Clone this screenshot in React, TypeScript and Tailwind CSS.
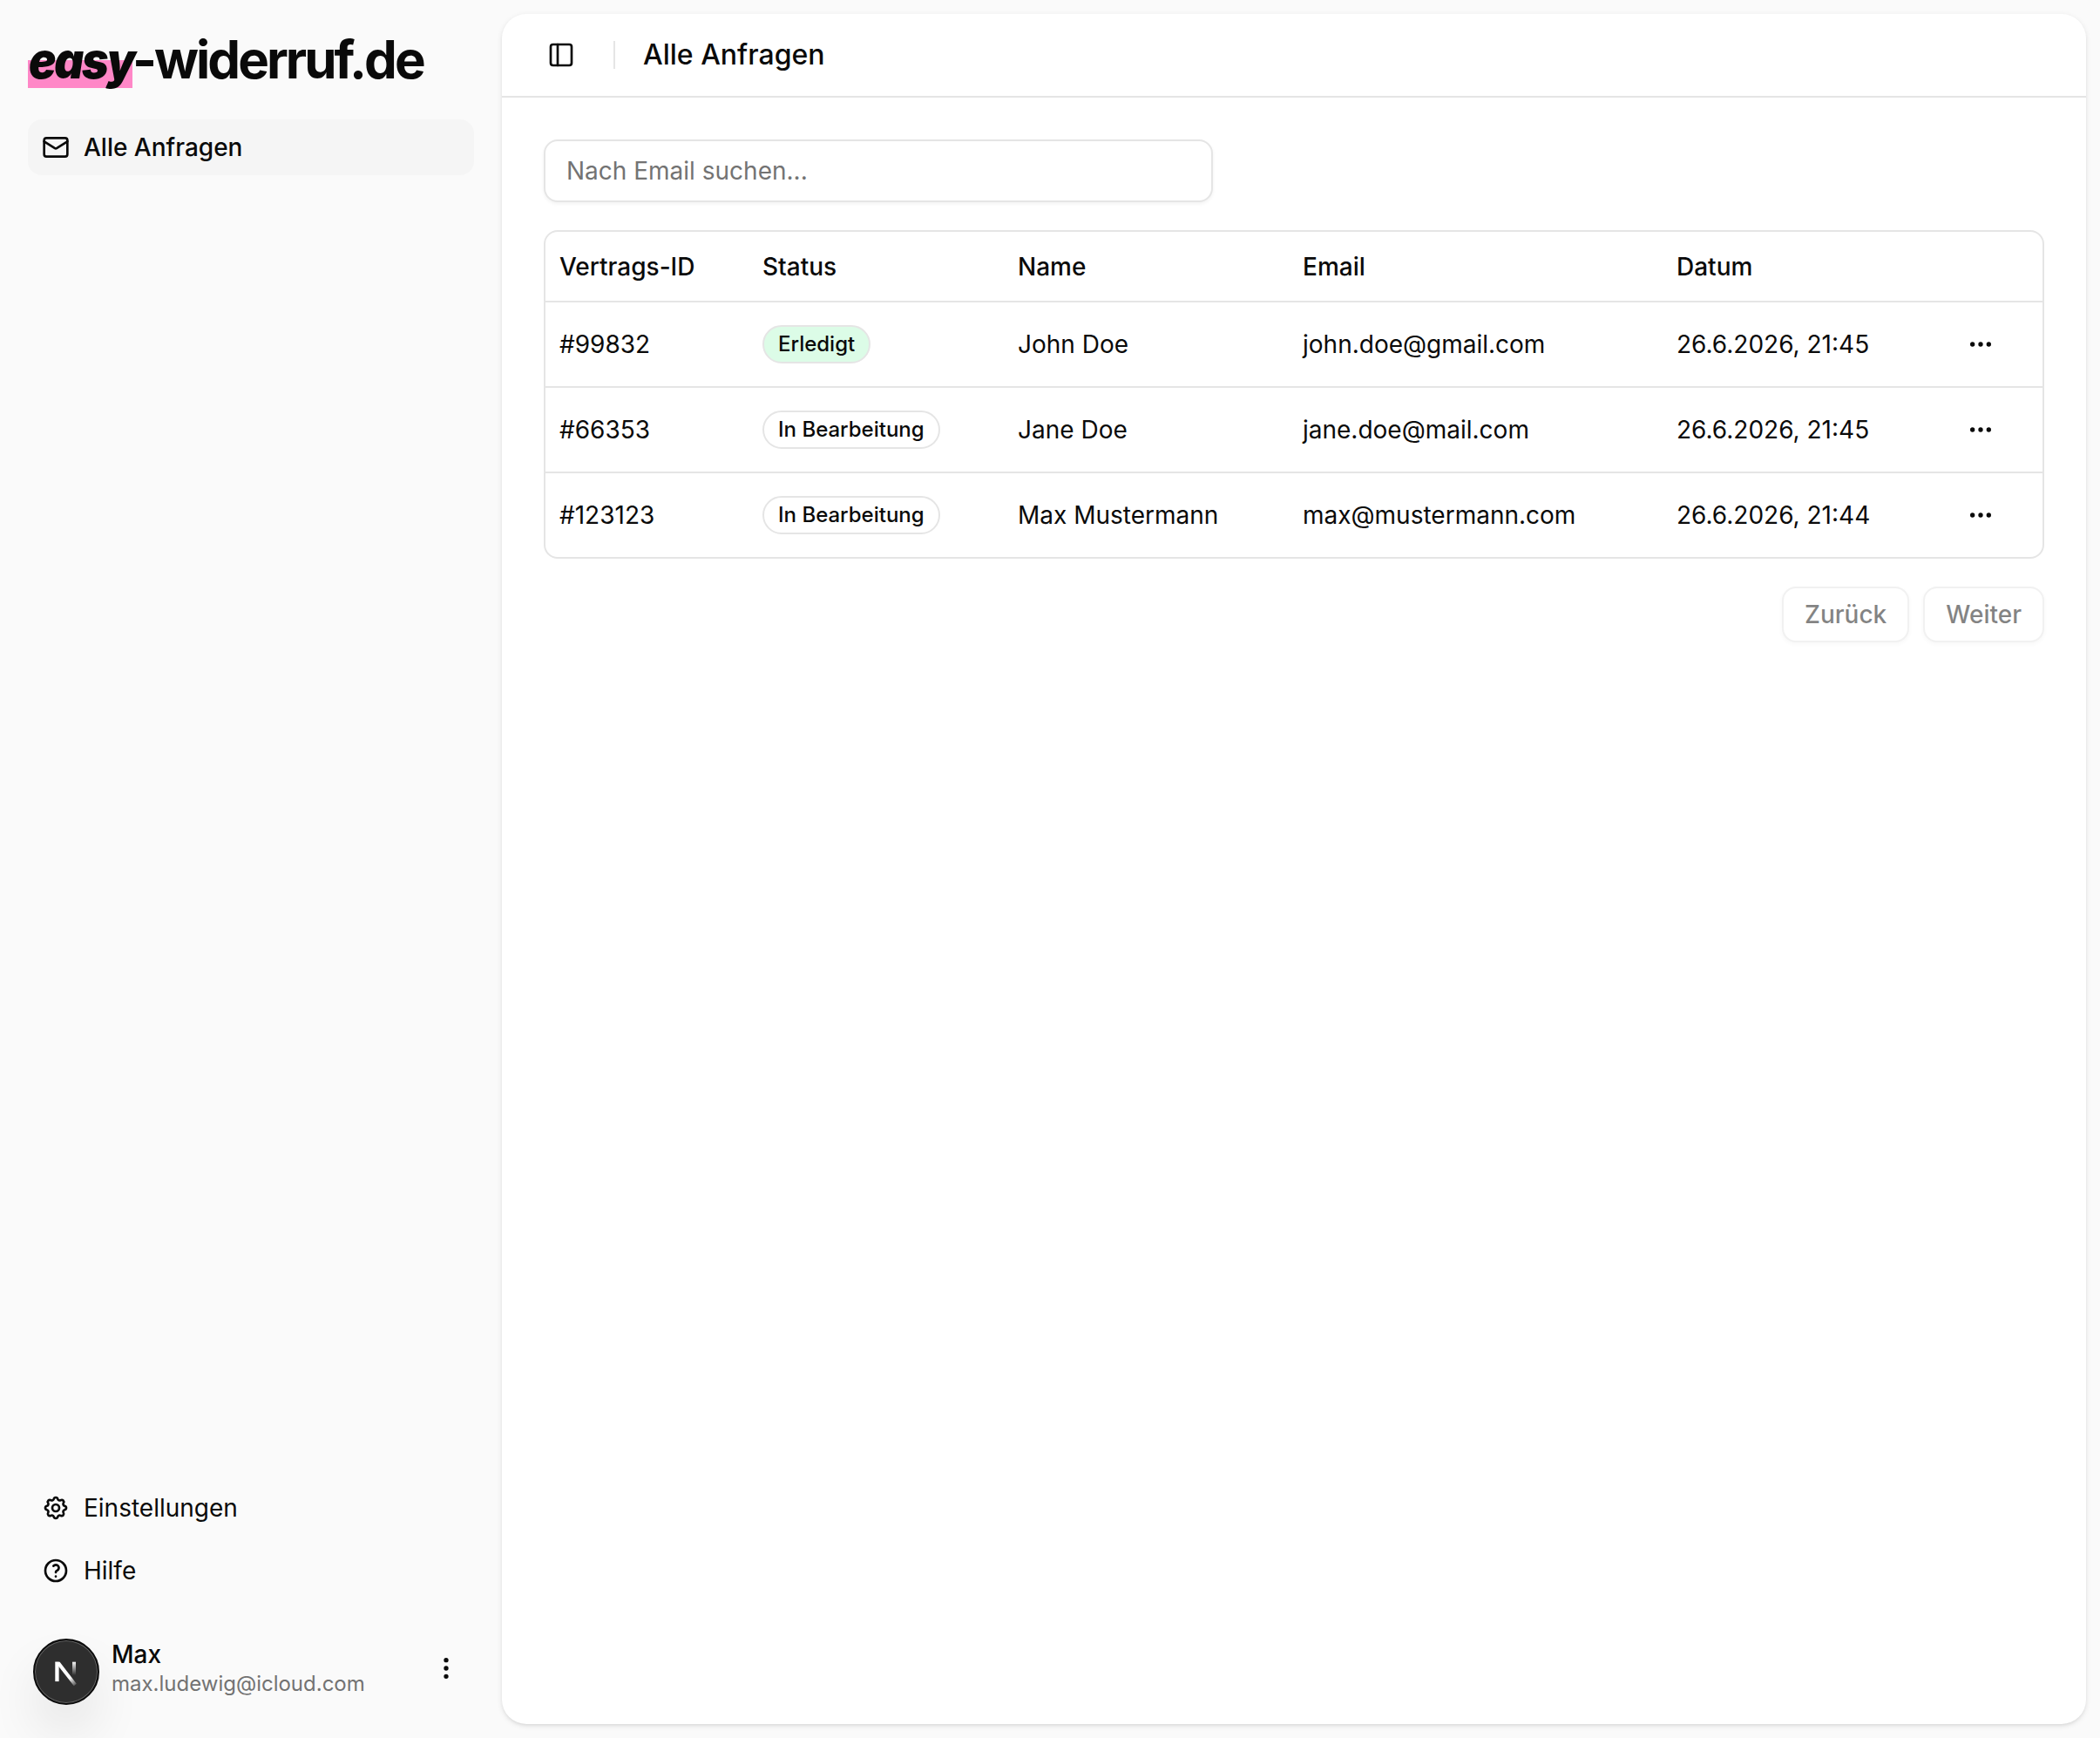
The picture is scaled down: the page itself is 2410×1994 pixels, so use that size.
import React from "react";

const rows = [
  { id: "#99832", done: true, name: "John Doe", email: "john.doe@gmail.com", date: "26.6.2026, 21:45" },
  { id: "#66353", done: false, name: "Jane Doe", email: "jane.doe@mail.com", date: "26.6.2026, 21:45" },
  { id: "#123123", done: false, name: "Max Mustermann", email: "max@mustermann.com", date: "26.6.2026, 21:44" },
];

function Icon({ children, className = "size-8" }: { children: React.ReactNode; className?: string }) {
  return (
    <svg
      viewBox="0 0 24 24"
      fill="none"
      stroke="currentColor"
      strokeWidth="2"
      strokeLinecap="round"
      strokeLinejoin="round"
      className={`shrink-0 ${className}`}
    >
      {children}
    </svg>
  );
}

function MailIcon() {
  return (
    <Icon>
      <path d="m22 7-8.991 5.727a2 2 0 0 1-2.009 0L2 7" />
      <rect x="2" y="4" width="20" height="16" rx="2" />
    </Icon>
  );
}

function SettingsIcon() {
  return (
    <Icon>
      <path d="M10.325 4.317c.426 -1.756 2.924 -1.756 3.35 0a1.724 1.724 0 0 0 2.573 1.066c1.543 -.94 3.31 .826 2.37 2.37a1.724 1.724 0 0 0 1.065 2.572c1.756 .426 1.756 2.924 0 3.35a1.724 1.724 0 0 0 -1.066 2.573c.94 1.543 -.826 3.31 -2.37 2.37a1.724 1.724 0 0 0 -2.572 1.065c-.426 1.756 -2.924 1.756 -3.35 0a1.724 1.724 0 0 0 -2.573 -1.066c-1.543 .94 -3.31 -.826 -2.37 -2.37a1.724 1.724 0 0 0 -1.065 -2.572c-1.756 -.426 -1.756 -2.924 0 -3.35a1.724 1.724 0 0 0 1.066 -2.573c-.94 -1.543 .826 -3.31 2.37 -2.37c1 .608 2.296 .07 2.572 -1.065z" />
      <path d="M9 12a3 3 0 1 0 6 0a3 3 0 0 0 -6 0" />
    </Icon>
  );
}

function HelpIcon() {
  return (
    <Icon>
      <path d="M12 12m-9 0a9 9 0 1 0 18 0a9 9 0 1 0 -18 0" />
      <path d="M12 17l0 .01" />
      <path d="M12 13.5a1.5 1.5 0 0 1 1 -1.5a2.6 2.6 0 1 0 -3 -4" />
    </Icon>
  );
}

function DotsVerticalIcon() {
  return (
    <Icon>
      <path d="M11 12a1 1 0 1 0 2 0a1 1 0 1 0 -2 0" />
      <path d="M11 19a1 1 0 1 0 2 0a1 1 0 1 0 -2 0" />
      <path d="M11 5a1 1 0 1 0 2 0a1 1 0 1 0 -2 0" />
    </Icon>
  );
}

function PanelIcon() {
  return (
    <Icon>
      <rect width="18" height="18" x="3" y="3" rx="2" />
      <path d="M9 3v18" />
    </Icon>
  );
}

function EllipsisIcon() {
  return (
    <Icon>
      <circle cx="12" cy="12" r="1" />
      <circle cx="19" cy="12" r="1" />
      <circle cx="5" cy="12" r="1" />
    </Icon>
  );
}

function DevBadge() {
  return (
    <div className="absolute left-[38px] top-[1880px] flex size-[76px] items-center justify-center rounded-full border-2 border-[#0c0c0c] bg-[#2e2e2e] shadow-[inset_0_0_0_1px_rgba(255,255,255,0.25),0_32px_64px_-16px_rgba(0,0,0,0.24)]">
      <svg viewBox="0 0 40 40" fill="none" className="size-[80px] shrink-0">
        <defs>
          <linearGradient id="diag" x1="20" y1="21.5" x2="25.4" y2="28.2" gradientUnits="userSpaceOnUse">
            <stop stopColor="#fff" />
            <stop offset="0.35" stopColor="#fff" />
            <stop offset="1" stopColor="#fff" stopOpacity="0.1" />
          </linearGradient>
          <linearGradient id="bar" x1="24.5" y1="14" x2="24.5" y2="22" gradientUnits="userSpaceOnUse">
            <stop stopColor="#fff" />
            <stop offset="1" stopColor="#fff" stopOpacity="0" />
          </linearGradient>
        </defs>
        <rect x="13.65" y="14.35" width="2.15" height="11.2" fill="#fff" />
        <path d="M13.65 14.35H16.3L25.9 26.9L24.4 28.1Z" fill="url(#diag)" />
        <rect x="23.5" y="14.35" width="2" height="7.6" fill="url(#bar)" />
      </svg>
    </div>
  );
}

function Logo() {
  return (
    <div className="mt-[35px] flex h-[66px] items-center whitespace-nowrap text-[60px] font-bold leading-[66px] tracking-[-3px]">
      <div className="relative h-[66px] w-[120px]">
        <div className="absolute left-0 top-[34px] h-8 w-[120px] bg-[#ff87c7]" />
        <div className="relative left-px top-[2px] w-fit origin-left scale-x-[0.92] text-[57px] font-black italic leading-[66px] tracking-[-2.4px]">
          easy
        </div>
      </div>
      <span>-widerruf.de</span>
    </div>
  );
}

function Sidebar() {
  return (
    <aside className="flex w-[576px] shrink-0 flex-col px-8">
      <Logo />
      <nav className="mt-9">
        <a className="flex h-16 w-[512px] items-center gap-4 rounded-2xl bg-[#f5f5f5] px-4 text-[28px] font-medium leading-10">
          <MailIcon />
          Alle Anfragen
        </a>
      </nav>
      <div className="mt-auto flex flex-col gap-2">
        <a className="flex h-16 items-center gap-4 px-4 text-[28px] leading-10">
          <SettingsIcon />
          Einstellungen
        </a>
        <a className="flex h-16 items-center gap-4 px-4 text-[28px] leading-10">
          <HelpIcon />
          Hilfe
        </a>
      </div>
      <div className="mb-8 mt-8 flex h-24 w-[512px] items-center pl-24 pr-4">
        <div className="flex flex-1 flex-col">
          <span className="text-[28px] font-medium leading-[35px]">Max</span>
          <span className="text-[24px] leading-8 text-[#737373]">max.ludewig@icloud.com</span>
        </div>
        <DotsVerticalIcon />
      </div>
    </aside>
  );
}

function Requests() {
  return (
    <section className="flex flex-col px-12 py-12">
      <input
        placeholder="Nach Email suchen..."
        className="h-[72px] w-[768px] rounded-2xl border-2 border-[#e5e5e5] bg-white px-6 text-[28px] shadow-[0_2px_4px_rgba(0,0,0,0.05)] placeholder:text-[#737373]"
      />
      <div className="mt-8 overflow-hidden rounded-2xl border-2 border-[#e5e5e5]">
        <table className="w-full table-fixed border-separate border-spacing-0 text-left text-[28px] leading-10">
          <colgroup>
            <col className="w-[233px]" />
            <col className="w-[293px]" />
            <col className="w-[327px]" />
            <col className="w-[429px]" />
            <col className="w-[317px]" />
            <col />
          </colgroup>
          <thead>
            <tr>
              {["Vertrags-ID", "Status", "Name", "Email", "Datum", ""].map((label) => (
                <th key={label} className="h-[81px] border-b-2 border-[#e5e5e5] px-4 py-0 font-medium">{label}</th>
              ))}
            </tr>
          </thead>
          <tbody className="[&_td]:h-[98px] [&_td]:border-b-2 [&_td]:border-[#e5e5e5] [&_td]:px-4 [&_td]:py-0 [&_tr:last-child_td]:h-[96px] [&_tr:last-child_td]:border-b-0">
            {rows.map((row) => (
              <tr key={row.id}>
                <td>{row.id}</td>
                <td>
                  <span
                    className={`flex h-11 w-fit items-center rounded-full border-2 border-[#e5e5e5] px-4 text-[24px] font-medium leading-8 ${row.done ? "bg-[#dcfce7]" : "bg-white"}`}
                  >
                    {row.done ? "Erledigt" : "In Bearbeitung"}
                  </span>
                </td>
                <td>{row.name}</td>
                <td>{row.email}</td>
                <td>{row.date}</td>
                <td>
                  <div className="flex size-16 items-center justify-center">
                    <EllipsisIcon />
                  </div>
                </td>
              </tr>
            ))}
          </tbody>
        </table>
      </div>
      <div className="mt-8 flex justify-end gap-4">
        {["Zurück", "Weiter"].map((label) => (
          <button
            key={label}
            disabled
            className="h-16 rounded-2xl border-2 border-[#e5e5e5] bg-white px-6 text-[28px] font-medium leading-10 opacity-50 shadow-[0_2px_4px_rgba(0,0,0,0.05)]"
          >
            {label}
          </button>
        ))}
      </div>
    </section>
  );
}

export default function App() {
  return (
    <div className="relative flex h-[1994px] w-[2410px] overflow-hidden bg-[#fafafa] font-['Inter',sans-serif] text-[#0a0a0a] antialiased">
      <Sidebar />
      <main className="my-4 mr-4 flex flex-1 flex-col rounded-[28px] bg-white shadow-[0_2px_6px_rgba(0,0,0,0.1),0_2px_4px_-2px_rgba(0,0,0,0.1)]">
        <header className="flex h-24 items-center border-b-2 border-[#e5e5e5] pl-12">
          <div className="flex size-[40px] items-center justify-center">
            <PanelIcon />
          </div>
          <div className="ml-10 h-8 w-0.5 bg-[#e5e5e5]" />
          <h1 className="ml-8 text-[32px] font-medium leading-[48px]">Alle Anfragen</h1>
        </header>
        <Requests />
      </main>
      <DevBadge />
    </div>
  );
}
